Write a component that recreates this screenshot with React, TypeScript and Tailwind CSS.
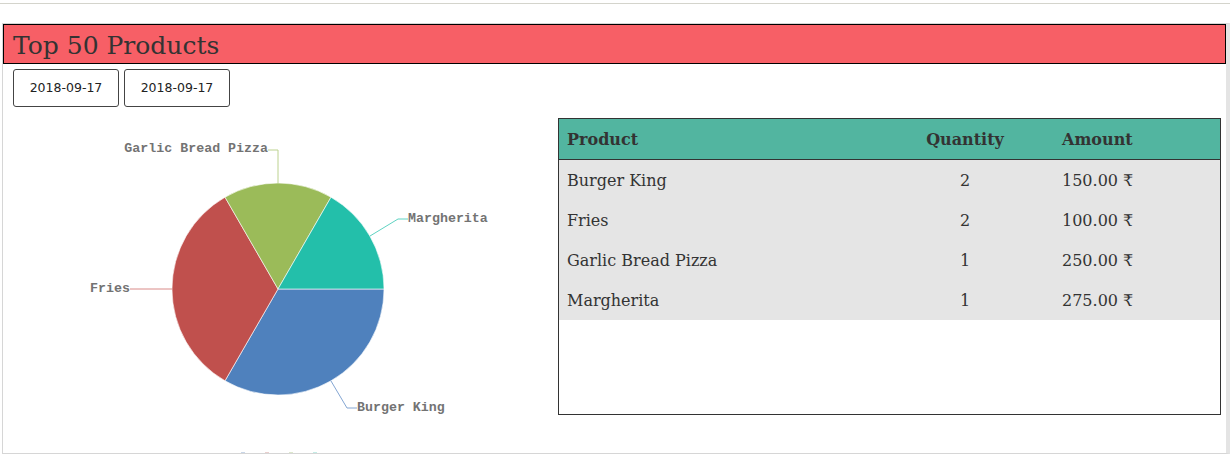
const rows = [
  { name: 'Burger King', qty: 2, amount: '150.00 ₹' },
  { name: 'Fries', qty: 2, amount: '100.00 ₹' },
  { name: 'Garlic Bread Pizza', qty: 1, amount: '250.00 ₹' },
  { name: 'Margherita', qty: 1, amount: '275.00 ₹' },
];

// pie drawn in svg coords, centre (275,182), r 106
function PieChart() {
  const label = 'font-bold text-[13.3px]';
  return (
    <svg width="555" height="346" viewBox="0 0 555 346" className="block">
      <g stroke="#ffffff" strokeWidth="0.6">
        <path d="M275 182 L381 182 A106 106 0 0 1 222 273.8 Z" fill="#4f81bd" />
        <path d="M275 182 L222 273.8 A106 106 0 0 1 222 90.2 Z" fill="#c0504d" />
        <path d="M275 182 L222 90.2 A106 106 0 0 1 328 90.2 Z" fill="#9bbb59" />
        <path d="M275 182 L328 90.2 A106 106 0 0 1 381 182 Z" fill="#23bfaa" />
      </g>
      <g fill="none" strokeWidth="1">
        <polyline points="367,129 395,112 405,112" stroke="#5fd3c2" />
        <polyline points="275,76 275,43 265,43" stroke="#bcd28f" />
        <polyline points="169,182 127,182" stroke="#d98a88" />
        <polyline points="328,274 344,301 354,301" stroke="#84a6d3" />
      </g>
      <g fill="#737373" style={{ fontFamily: '"Liberation Mono", monospace' }}>
        <text x="405" y="115" className={label}>Margherita</text>
        <text x="265" y="45" textAnchor="end" className={label}>Garlic Bread Pizza</text>
        <text x="127" y="185" textAnchor="end" className={label}>Fries</text>
        <text x="354" y="304" className={label}>Burger King</text>
      </g>
      <g>
        <rect x="238" y="345" width="4" height="1" fill="#c9d6e8" />
        <rect x="262" y="345" width="4" height="1" fill="#ead0cf" />
        <rect x="286" y="345" width="4" height="1" fill="#dde8cc" />
        <rect x="310" y="345" width="4" height="1" fill="#c4ece6" />
      </g>
    </svg>
  );
}

export default function App() {
  return (
    <div className="w-[1230px] h-[457px] bg-white overflow-hidden font-['DejaVu_Serif',serif] text-[#333333]">
      <div className="mt-[3px] h-px bg-[#d4d4cc]" />
      <div className="mt-[19px] ml-[2px] h-[431px] border border-[#d6d6d6] border-r-4 border-r-[#e4e4e4]">
        <div className="h-[40px] bg-[#f75f66] border border-black flex items-center pl-[9px] pt-[2px] text-[25px] leading-none">
          Top 50 Products
        </div>

        <div className="mt-[5px] ml-[10px] flex gap-[5px] font-['DejaVu_Sans',sans-serif] text-[12.5px] text-[#222222]">
          <button className="w-[106px] h-[38px] border border-[#444444] rounded-[3px] bg-white">2018-09-17</button>
          <button className="w-[106px] h-[38px] border border-[#444444] rounded-[3px] bg-white">2018-09-17</button>
        </div>

        <div className="flex">
          <div className="w-[555px]">
            <PieChart />
          </div>

          <div className="mt-[11px] w-[663px] h-[297px] border border-[#333333]">
            <div className="h-[41px] pt-[2px] bg-[#52b5a0] border-b border-[#333333] grid grid-cols-[366px_80px_1fr] items-center font-bold text-[16px]">
              <div className="pl-2">Product</div>
              <div className="text-center">Quantity</div>
              <div className="pl-[57px]">Amount</div>
            </div>
            {rows.map((r) => (
              <div key={r.name} className="h-[40px] pt-[2px] bg-[#e5e5e5] grid grid-cols-[366px_80px_1fr] items-center text-[16px]">
                <div className="pl-2">{r.name}</div>
                <div className="text-center">{r.qty}</div>
                <div className="pl-[57px]">{r.amount}</div>
              </div>
            ))}
          </div>
        </div>
      </div>
    </div>
  );
}
